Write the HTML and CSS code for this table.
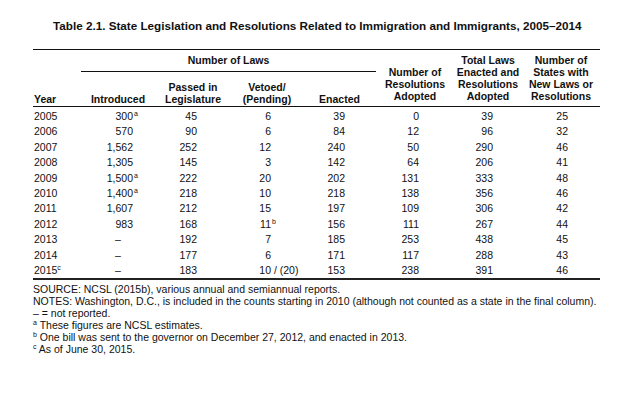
FILE: index.html
```html
<!DOCTYPE html>
<html lang="en">
<head>
<meta charset="utf-8">
<title>Table 2.1</title>
<link rel="stylesheet" href="styles.css">
</head>
<body>
<div class="page">
  <h1 class="title">Table 2.1. State Legislation and Resolutions Related to Immigration and Immigrants, 2005–2014</h1>
  <table class="tbl">
    <colgroup>
      <col class="c-year"><col class="c-intro"><col class="c-passed"><col class="c-vetoed"><col class="c-enacted"><col class="c-res"><col class="c-total"><col class="c-states">
    </colgroup>
    <thead>
      <tr class="r-group">
        <th rowspan="2" class="h-year">Year</th>
        <th colspan="4" class="h-laws">Number of Laws</th>
        <th rowspan="2" class="h-right">Number of<br>Resolutions<br>Adopted</th>
        <th rowspan="2" class="h-right">Total Laws<br>Enacted and<br>Resolutions<br>Adopted</th>
        <th rowspan="2" class="h-right">Number of<br>States with<br>New Laws or<br>Resolutions</th>
      </tr>
      <tr class="r-sub">
        <th>Introduced</th>
        <th>Passed in<br>Legislature</th>
        <th>Vetoed/<br>(Pending)</th>
        <th>Enacted</th>
      </tr>
    </thead>
    <tbody>
      <tr class="first"><td>2005</td><td>300<span class="hang"><sup>a</sup></span></td><td>45</td><td>6</td><td>39</td><td>0</td><td>39</td><td>25</td></tr>
      <tr><td>2006</td><td>570</td><td>90</td><td>6</td><td>84</td><td>12</td><td>96</td><td>32</td></tr>
      <tr><td>2007</td><td>1,562</td><td>252</td><td>12</td><td>240</td><td>50</td><td>290</td><td>46</td></tr>
      <tr><td>2008</td><td>1,305</td><td>145</td><td>3</td><td>142</td><td>64</td><td>206</td><td>41</td></tr>
      <tr><td>2009</td><td>1,500<span class="hang"><sup>a</sup></span></td><td>222</td><td>20</td><td>202</td><td>131</td><td>333</td><td>48</td></tr>
      <tr><td>2010</td><td>1,400<span class="hang"><sup>a</sup></span></td><td>218</td><td>10</td><td>218</td><td>138</td><td>356</td><td>46</td></tr>
      <tr><td>2011</td><td>1,607</td><td>212</td><td>15</td><td>197</td><td>109</td><td>306</td><td>42</td></tr>
      <tr><td>2012</td><td>983</td><td>168</td><td>11<span class="hang"><sup>b</sup></span></td><td>156</td><td>111</td><td>267</td><td>44</td></tr>
      <tr><td>2013</td><td class="dash">–</td><td>192</td><td>7</td><td>185</td><td>253</td><td>438</td><td>45</td></tr>
      <tr><td>2014</td><td class="dash">–</td><td>177</td><td>6</td><td>171</td><td>117</td><td>288</td><td>43</td></tr>
      <tr class="last"><td>2015<sup>c</sup></td><td class="dash">–</td><td>183</td><td>10<span class="hang"> / (20)</span></td><td>153</td><td>238</td><td>391</td><td>46</td></tr>
    </tbody>
  </table>
  <div class="notes">
    <p>SOURCE: NCSL (2015b), various annual and semiannual reports.</p>
    <p>NOTES: Washington, D.C., is included in the counts starting in 2010 (although not counted as a state in the final column).</p>
    <p>– = not reported.</p>
    <p><sup>a</sup> These figures are NCSL estimates.</p>
    <p><sup>b</sup> One bill was sent to the governor on December 27, 2012, and enacted in 2013.</p>
    <p><sup>c</sup> As of June 30, 2015.</p>
  </div>
</div>
</body>
</html>
```

FILE: styles.css
```css
html, body {
  margin: 0;
  padding: 0;
  background: #ffffff;
}

.page {
  padding: 18px 0 0 33px;
  width: 567px;
  font-family: "Liberation Sans", Arial, sans-serif;
  color: #111111;
  font-size: 10.5px;
}

.title {
  margin: 0 0 15px 20px;
  font-size: 11.7px;
  line-height: 16px;
  font-weight: bold;
  white-space: nowrap;
}

.tbl {
  width: 567px;
  table-layout: fixed;
  border-collapse: collapse;
  border-top: 1.5px solid #111;
  border-bottom: 2px solid #222;
}

.c-year { width: 48px; }
.c-intro { width: 74px; }
.c-passed { width: 76px; }
.c-vetoed { width: 72px; }
.c-enacted { width: 73px; }
.c-res { width: 78px; }
.c-total { width: 68px; }
.c-states { width: 78px; }

.tbl th {
  font-weight: bold;
  text-align: center;
  vertical-align: bottom;
  line-height: 11.9px;
  padding: 0 0 0.5px 0;
  border-bottom: 1.5px solid #111;
}

.r-group { height: 22px; }
.r-sub { height: 35px; }

.tbl th.h-laws {
  vertical-align: middle;
  padding: 0;
}

.tbl th.h-year {
  text-align: left;
  padding-left: 1px;
}

.tbl th.h-right {
  padding-bottom: 3px;
}

.tbl td {
  padding: 0;
  line-height: 15.4px;
  text-align: right;
  white-space: nowrap;
}

.tbl tr.first td { padding-top: 2px; }

.tbl td:nth-child(1) { text-align: left; padding-left: 1px; }
.tbl td:nth-child(2) { padding-right: 22px; }
.tbl td:nth-child(3) { padding-right: 34px; }
.tbl td:nth-child(4) { padding-right: 32px; }
.tbl td:nth-child(5) { padding-right: 31px; }
.tbl td:nth-child(6) { padding-right: 35px; }
.tbl td:nth-child(7) { padding-right: 29px; }
.tbl td:nth-child(8) { padding-right: 32px; }

.tbl td.dash {
  text-align: center;
  padding-right: 0;
}

.hang {
  display: inline-block;
  width: 0;
  white-space: pre;
  text-align: left;
}

sup {
  font-size: 7px;
  line-height: 0;
  vertical-align: 4px;
}

.hang sup {
  margin-left: 1px;
}

.notes {
  margin-top: 3px;
}

.notes p {
  margin: 0;
  line-height: 12px;
  white-space: nowrap;
}
```
